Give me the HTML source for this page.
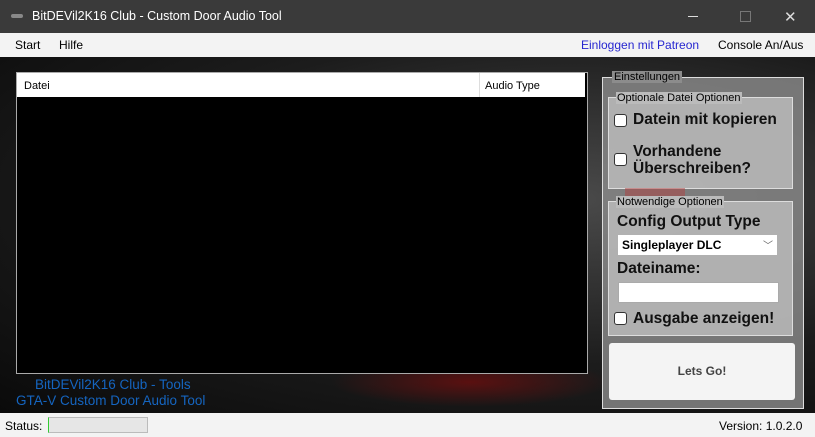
<!DOCTYPE html><html><head><style>
body{margin:0;width:815px;height:437px;overflow:hidden;font-family:"Liberation Sans",sans-serif;position:relative;background:#111}
.a{position:absolute}
</style></head><body>
<div class="a" style="left:0;top:0;width:815px;height:33px;background:#3a3a3a;color:#fff;font-size:12.5px">
<div class="a" style="left:11px;top:14px;width:12px;height:4px;background:#888;border-radius:2px"></div>
<div class="a" style="left:32px;top:9px">BitDEVil2K16 Club - Custom Door Audio Tool</div>
<div class="a" style="left:688px;top:16px;width:10px;height:1px;background:#ddd"></div>
<div class="a" style="left:740px;top:11px;width:9px;height:9px;border:1px solid #777"></div>
<div class="a" style="left:784px;top:8px;color:#ddd;font-size:15px">✕</div>
</div>
<div class="a" style="left:0;top:33px;width:815px;height:24px;background:#f3f3f3;font-size:12px;color:#000">
<div class="a" style="left:15px;top:5px">Start</div><div class="a" style="left:59px;top:5px">Hilfe</div>
<div class="a" style="left:581px;top:5px;color:#2626d0">Einloggen mit Patreon</div>
<div class="a" style="left:718px;top:5px">Console An/Aus</div></div>
<div class="a" style="left:0;top:57px;width:815px;height:356px;background:radial-gradient(ellipse at 70% 40%,#4a4a4a,#1c1c1c 55%,#0a0a0a)">
<div class="a" style="left:330px;top:300px;width:280px;height:50px;background:radial-gradient(ellipse,#5a1010,transparent 70%)"></div>
</div>
<div class="a" style="left:16px;top:72px;width:570px;height:300px;background:#000;border:1px solid #aaa"></div>
<div class="a" style="left:17px;top:73px;width:568px;height:24px;background:#fff;font-size:11px">
<div class="a" style="left:7px;top:7px">Datei</div>
<div class="a" style="left:462px;top:0;width:1px;height:24px;background:#ddd"></div>
<div class="a" style="left:468px;top:7px">Audio Type</div></div>
<div class="a" style="left:16px;top:377px;font-size:13.5px;color:#1565c0;line-height:16px">
<div style="padding-left:19px">BitDEVil2K16 Club - Tools</div><div>GTA-V Custom Door Audio Tool</div></div>
<div class="a" style="left:602px;top:77px;width:200px;height:330px;background:rgba(140,140,140,.8);border:1px solid #ddd"></div>
<div class="a" style="left:612px;top:71px;font-size:11px;background:#8c8c8c;padding:0 2px;color:#000">Einstellungen</div>
<div class="a" style="left:608px;top:97px;width:183px;height:90px;background:rgba(190,190,190,.8);border:1px solid #ddd"></div>
<div class="a" style="left:616px;top:92px;font-size:11px;color:#000;background:#bbb;padding:0 1px">Optionale Datei Optionen</div>
<div class="a" style="left:625px;top:188px;width:60px;height:12px;background:#b04040;opacity:.5"></div>
<div class="a" style="left:614px;top:114px;width:11px;height:11px;border:1px solid #333;border-radius:3px;background:#fff"></div>
<div class="a" style="left:633px;top:111px;font-size:15.5px;font-weight:bold;color:#111">Datein mit kopieren</div>
<div class="a" style="left:614px;top:153px;width:11px;height:11px;border:1px solid #333;border-radius:3px;background:#fff"></div>
<div class="a" style="left:633px;top:143px;font-size:15.5px;font-weight:bold;color:#111;line-height:17px">Vorhandene<br>Überschreiben?</div>
<div class="a" style="left:608px;top:201px;width:183px;height:133px;background:rgba(190,190,190,.8);border:1px solid #ddd"></div>
<div class="a" style="left:616px;top:196px;font-size:11px;color:#000;background:#bbb;padding:0 1px">Notwendige Optionen</div>
<div class="a" style="left:617px;top:213px;font-size:15.5px;font-weight:bold;color:#111">Config Output Type</div>
<div class="a" style="left:618px;top:235px;width:159px;height:20px;background:#fff;font-size:12px;font-weight:bold"><span class="a" style="left:4px;top:3px">Singleplayer DLC</span><span class="a" style="left:145px;top:2px;font-weight:normal;color:#666;font-size:10px">﹀</span></div>
<div class="a" style="left:617px;top:260px;font-size:15.5px;font-weight:bold;color:#111">Dateiname:</div>
<div class="a" style="left:618px;top:282px;width:159px;height:19px;background:#fff;border:1px solid #aaa"></div>
<div class="a" style="left:614px;top:312px;width:11px;height:11px;border:1px solid #333;border-radius:3px;background:#fff"></div>
<div class="a" style="left:633px;top:310px;font-size:15.5px;font-weight:bold;color:#111">Ausgabe anzeigen!</div>
<div class="a" style="left:609px;top:343px;width:186px;height:57px;background:#f4f4f4;border-radius:3px;font-size:12px;font-weight:bold;color:#444;text-align:center;line-height:57px">Lets Go!</div>
<div class="a" style="left:0;top:413px;width:815px;height:24px;background:#f3f3f3;font-size:12px">
<div class="a" style="left:5px;top:6px">Status:</div>
<div class="a" style="left:48px;top:4px;width:98px;height:14px;background:#e6e6e6;border:1px solid #bbb;border-left:1px solid #3c3"></div>
<div class="a" style="left:719px;top:6px">Version: 1.0.2.0</div></div>
</body></html>
